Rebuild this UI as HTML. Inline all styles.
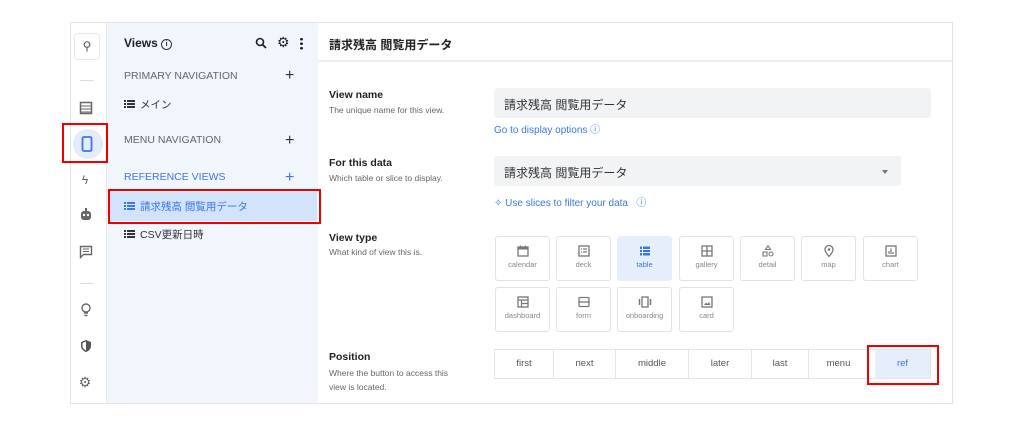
<!DOCTYPE html>
<html><head><meta charset="utf-8"><style>
*{box-sizing:border-box;margin:0;padding:0}
body{width:1024px;height:427px;background:#fff;font-family:"Liberation Sans","Noto Sans CJK JP",sans-serif;position:relative;overflow:hidden;color:#333}
.a{position:absolute}
.frame{left:70px;top:22px;width:883px;height:382px;border:1px solid #e3e3e3}
.rail{left:71px;top:23px;width:36px;height:380px;background:#fff;border-right:1px solid #e8e8e8}
.side{left:107px;top:23px;width:211px;height:380px;background:#f1f5fc}
.hdr{left:318px;top:23px;width:634px;height:39px;border-bottom:2px solid #eee}
.ic{position:absolute;left:78px;width:14px;height:14px;color:#666;font-size:13px;text-align:center;line-height:14px}
.sec{position:absolute;left:124px;font-size:10.5px;color:#666}
.plus{position:absolute;left:285px;font-size:16px;color:#333;line-height:12px}
.item{position:absolute;left:124px;font-size:10.5px;color:#333}
.lb{position:absolute;left:329px;font-size:10.5px;font-weight:bold;color:#222}
.sub{position:absolute;left:329px;font-size:8.5px;color:#666}
.inp{position:absolute;left:494px;height:30px;background:#f1f3f4;border-radius:3px;font-size:12px;color:#333;padding:8px 10px}
.tile{position:absolute;width:55px;height:45px;border:1px solid #e2e2e2;border-radius:3px;font-size:7.5px;color:#888;text-align:center}
.tile svg{display:block;margin:8px auto 3px}
.seg{position:absolute;top:349px;height:30px;border:1px solid #e4e4e4;font-size:9.5px;color:#555;text-align:center;line-height:28px}
.red{position:absolute;border:2px solid #e00}
.lst{display:inline-block;width:11px;height:8px;vertical-align:0;margin-right:5px;background:linear-gradient(currentColor,currentColor) 0 0/2px 2px no-repeat,linear-gradient(currentColor,currentColor) 0 3px/2px 2px no-repeat,linear-gradient(currentColor,currentColor) 0 6px/2px 2px no-repeat,linear-gradient(currentColor,currentColor) 3px 0/8px 2px no-repeat,linear-gradient(currentColor,currentColor) 3px 3px/8px 2px no-repeat,linear-gradient(currentColor,currentColor) 3px 6px/8px 2px no-repeat}
</style></head><body>
<div class="a frame"></div>
<div class="a rail"></div>
<div class="a side"></div>
<div class="a hdr"></div>

<div class="a" style="left:74px;top:33px;width:26px;height:27px;border:1px solid #e8e8e8;border-radius:4px;font-size:12px;color:#555;text-align:center;line-height:25px">⚲</div>
<div class="a" style="left:80px;top:80px;width:14px;height:1px;background:#ddd"></div>
<svg class="a" style="left:79px;top:101px" width="14" height="14" viewBox="0 0 14 14"><rect x="1.5" y="1.5" width="11" height="11" fill="none" stroke="#666" stroke-width="1.5"/><path d="M2 5h10M2 8h10M2 11h10" stroke="#666"/></svg>
<div class="a" style="left:73px;top:129px;width:30px;height:30px;border-radius:50%;background:#e3ecf9"></div>
<svg class="a" style="left:81px;top:136px" width="12" height="16" viewBox="0 0 12 16"><rect x="1.5" y="1" width="9" height="14" rx="1.5" fill="none" stroke="#3b78e7" stroke-width="1.8"/></svg>
<div class="red" style="left:62px;top:123px;width:46px;height:40px"></div>
<div class="ic" style="top:173px;font-size:12px">ϟ</div>
<svg class="a" style="left:79px;top:208px" width="14" height="14" viewBox="0 0 14 14"><rect x="2" y="3" width="10" height="9" rx="3" fill="#666"/><circle cx="5" cy="7" r="1.2" fill="#fff"/><circle cx="9" cy="7" r="1.2" fill="#fff"/><rect x="6" y="0" width="2" height="3" fill="#666"/></svg>
<svg class="a" style="left:79px;top:245px" width="14" height="14" viewBox="0 0 14 14"><path d="M1.5 1.5h11v8h-8l-3 3z" fill="none" stroke="#666" stroke-width="1.4"/><path d="M4 4h6M4 6.5h6" stroke="#666"/></svg>
<div class="a" style="left:80px;top:283px;width:14px;height:1px;background:#ddd"></div>
<svg class="a" style="left:80px;top:303px" width="12" height="14" viewBox="0 0 12 14"><circle cx="6" cy="5" r="4" fill="none" stroke="#666" stroke-width="1.4"/><path d="M4 10h4M4.5 12.5h3" stroke="#666" stroke-width="1.4"/></svg>
<svg class="a" style="left:80px;top:339px" width="12" height="14" viewBox="0 0 12 14"><path d="M6 1l5 2v4c0 3-2.5 5-5 6-2.5-1-5-3-5-6V3z" fill="#555"/><path d="M6 2.5v9c-2-1-3.5-2.5-3.5-4.5V4z" fill="#fff"/></svg>
<div class="ic" style="top:375px;font-size:14px">⚙</div>

<div class="a" style="left:124px;top:36px;font-size:12px;font-weight:bold;color:#222">Views <span style="display:inline-block;width:11px;height:11px;border:1.3px solid #333;border-radius:50%;font-size:7px;text-align:center;line-height:9px;vertical-align:1px">i</span></div>
<svg class="a" style="left:255px;top:37px" width="12" height="12" viewBox="0 0 12 12"><circle cx="5" cy="5" r="3.5" fill="none" stroke="#222" stroke-width="1.6"/><path d="M7.5 7.5l3.5 3.5" stroke="#222" stroke-width="1.8"/></svg>
<div class="a" style="left:277px;top:34px;font-size:14px;color:#222">⚙</div>
<div class="a" style="left:300px;top:37px;width:3px;height:13px;background:radial-gradient(circle,#222 1.3px,transparent 1.5px) 0 0/3px 4.5px"></div>
<div class="sec" style="top:70px">PRIMARY NAVIGATION</div><div class="plus" style="top:70px">+</div>
<div class="item" style="top:97px"><span class="lst"></span>メイン</div>
<div class="sec" style="top:134px">MENU NAVIGATION</div><div class="plus" style="top:135px">+</div>
<div class="sec" style="top:171px;color:#3b78e7">REFERENCE VIEWS</div><div class="plus" style="top:172px;color:#3b78e7">+</div>
<div class="a" style="left:110px;top:192px;width:207px;height:29px;background:#d2e3fc"></div>
<div class="item" style="top:199px;color:#3b78e7"><span class="lst"></span>請求残高 閲覧用データ</div>
<div class="red" style="left:108px;top:189px;width:213px;height:35px"></div>
<div class="item" style="top:227px"><span class="lst"></span>CSV更新日時</div>

<div class="a" style="left:329px;top:36px;font-size:12px;font-weight:bold;color:#222">請求残高 閲覧用データ</div>
<div class="lb" style="top:89px">View name</div>
<div class="sub" style="top:105px">The unique name for this view.</div>
<div class="inp" style="top:88px;width:437px">請求残高 閲覧用データ</div>
<div class="a" style="left:494px;top:121px;font-size:10px;color:#3b78e7">Go to display options ⓘ</div>
<div class="lb" style="top:157px">For this data</div>
<div class="sub" style="top:173px">Which table or slice to display.</div>
<div class="inp" style="top:156px;width:407px">請求残高 閲覧用データ</div>
<div class="a" style="left:882px;top:170px;width:0;height:0;border:3.5px solid transparent;border-top:4px solid #777"></div>
<div class="a" style="left:494px;top:194px;font-size:10px;color:#3b78e7">✧ Use slices to filter your data &nbsp; ⓘ</div>
<div class="lb" style="top:232px">View type</div>
<div class="sub" style="top:247px">What kind of view this is.</div>

<div class="tile" style="left:495px;top:236px"><svg width="12" height="12" viewBox="0 0 12 12"><rect x="1" y="2" width="10" height="9" fill="none" stroke="#777" stroke-width="1.3"/><rect x="1" y="2" width="10" height="2.5" fill="#777"/><path d="M3.5 0.5v2M8.5 0.5v2" stroke="#777"/></svg>calendar</div>
<div class="tile" style="left:556px;top:236px"><svg width="12" height="12" viewBox="0 0 12 12"><rect x="1" y="1" width="10" height="10" fill="none" stroke="#777" stroke-width="1.3"/><path d="M3 4h1M5 4h4M3 7h1M5 7h4" stroke="#777" stroke-width="1.2"/></svg>deck</div>
<div class="tile" style="left:617px;top:236px;background:#e6eefc;border-color:#e6eefc;color:#3b78e7"><svg width="12" height="12" viewBox="0 0 12 12"><rect x="1" y="1.5" width="10" height="9" fill="#3b78e7"/><path d="M1 4.5h10M1 7.5h10M3.5 1.5v9" stroke="#e6eefc"/></svg>table</div>
<div class="tile" style="left:679px;top:236px"><svg width="12" height="12" viewBox="0 0 12 12"><rect x="1" y="1" width="10" height="10" fill="none" stroke="#777" stroke-width="1.3"/><path d="M6 1v10M1 6h10" stroke="#777" stroke-width="1.3"/></svg>gallery</div>
<div class="tile" style="left:740px;top:236px"><svg width="12" height="12" viewBox="0 0 12 12"><path d="M6 0.8L8.5 4.5h-5z" fill="none" stroke="#777" stroke-width="1.1"/><rect x="1" y="7" width="4" height="4" fill="none" stroke="#777" stroke-width="1.1"/><circle cx="9" cy="9" r="2" fill="none" stroke="#777" stroke-width="1.1"/></svg>detail</div>
<div class="tile" style="left:801px;top:236px"><svg width="12" height="12" viewBox="0 0 12 12"><path d="M6 11.5C3 8 2 6 2 4.5a4 4 0 018 0C10 6 9 8 6 11.5z" fill="none" stroke="#777" stroke-width="1.3"/><circle cx="6" cy="4.5" r="1.3" fill="#777"/></svg>map</div>
<div class="tile" style="left:863px;top:236px"><svg width="12" height="12" viewBox="0 0 12 12"><rect x="1" y="1" width="10" height="10" fill="none" stroke="#777" stroke-width="1.3"/><path d="M4 9V6M6 9V3.5M8 9V7" stroke="#777" stroke-width="1.2"/></svg>chart</div>
<div class="tile" style="left:495px;top:287px"><svg width="12" height="12" viewBox="0 0 12 12"><rect x="1" y="1" width="10" height="10" fill="none" stroke="#777" stroke-width="1.3"/><path d="M1 4h10M4.5 4v7M4.5 7.5h6.5" stroke="#777" stroke-width="1.2"/></svg>dashboard</div>
<div class="tile" style="left:556px;top:287px"><svg width="12" height="12" viewBox="0 0 12 12"><rect x="1" y="1.5" width="10" height="9" rx="1" fill="none" stroke="#777" stroke-width="1.3"/><path d="M1 6h10" stroke="#777" stroke-width="1.3"/></svg>form</div>
<div class="tile" style="left:617px;top:287px"><svg width="14" height="12" viewBox="0 0 14 12"><rect x="4" y="1" width="6" height="10" fill="none" stroke="#777" stroke-width="1.3"/><path d="M1.5 3v6M12.5 3v6" stroke="#777" stroke-width="1.5"/></svg>onboarding</div>
<div class="tile" style="left:679px;top:287px"><svg width="12" height="12" viewBox="0 0 12 12"><rect x="1" y="1" width="10" height="10" fill="none" stroke="#777" stroke-width="1.3"/><path d="M3 9l2-2.5 1.5 1.5L8 6l1.5 3z" fill="#777"/></svg>card</div>

<div class="lb" style="top:351px">Position</div>
<div class="sub" style="top:366px;line-height:14px">Where the button to access this<br>view is located.</div>
<div class="seg" style="left:494px;width:60px">first</div>
<div class="seg" style="left:553px;width:63px">next</div>
<div class="seg" style="left:615px;width:74px">middle</div>
<div class="seg" style="left:688px;width:64px">later</div>
<div class="seg" style="left:751px;width:58px">last</div>
<div class="seg" style="left:808px;width:60px;border-right:none">menu</div>
<div class="seg" style="left:868px;width:63px;border-left:none"></div>
<div class="a" style="left:875px;top:350px;width:55px;height:28px;background:#e6eefc;border-radius:2px;font-size:9.5px;color:#3b78e7;text-align:center;line-height:28px">ref</div>
<div class="red" style="left:867px;top:345px;width:72px;height:40px"></div>
</body></html>
